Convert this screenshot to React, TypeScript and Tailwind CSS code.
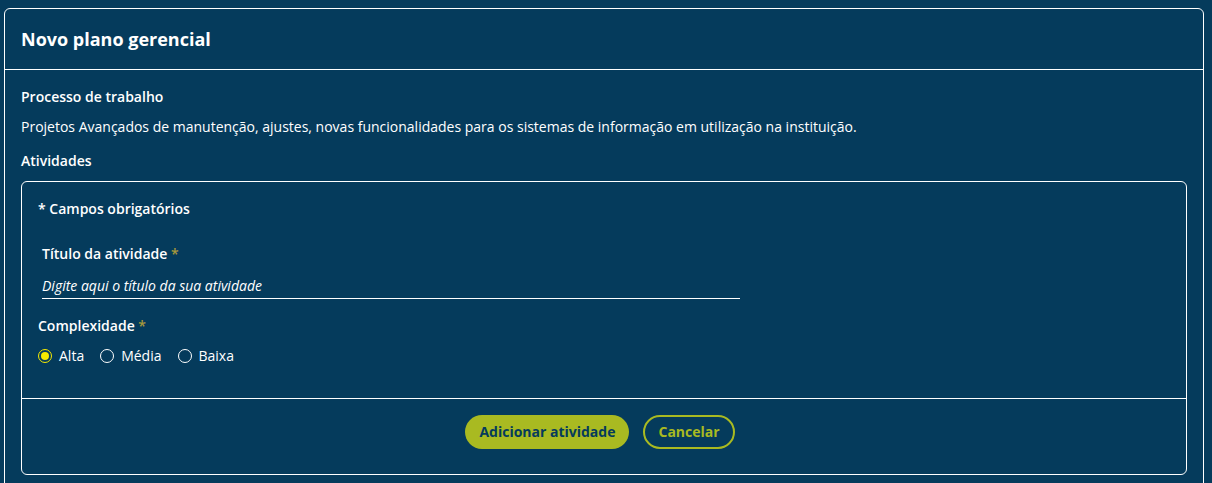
export default function App() {
  const options = ['Alta', 'Média', 'Baixa'];

  return (
    <div
      className="min-h-screen bg-[#053b5c] pl-1 pr-2 pt-2 text-white"
      style={{ fontFamily: '"Open Sans", sans-serif' }}
    >
      <div className="rounded-md border border-white">
        {/* Header */}
        <div className="flex h-[61px] items-center border-b border-white px-4">
          <h1 className="text-[18px] font-bold">Novo plano gerencial</h1>
        </div>

        {/* Body */}
        <div className="px-4 pt-[17px] pb-6 text-[14px] leading-5">
          <p className="font-semibold">Processo de trabalho</p>
          <p className="mt-[10px]">
            Projetos Avançados de manutenção, ajustes, novas funcionalidades para os sistemas de informação em
            utilização na instituição.
          </p>
          <p className="mt-[14px] font-semibold">Atividades</p>

          <div className="mt-[10px] rounded-md border border-white">
            <div className="px-4 pt-[17px] pb-8">
              <p className="font-semibold">* Campos obrigatórios</p>

              <div className="mt-[25px] pl-1">
                <label className="block font-semibold">
                  Título da atividade <span className="text-[#a8993b]">*</span>
                </label>
                <div className="mt-3 w-[698px] border-b border-white pb-[2px] italic">
                  Digite aqui o título da sua atividade
                </div>
              </div>

              <p className="mt-[17px] font-semibold">
                Complexidade <span className="text-[#a8993b]">*</span>
              </p>
              <div className="mt-[10px] flex items-center gap-4">
                {options.map((opt, i) => (
                  <label key={opt} className="flex items-center gap-[7px]">
                    {i === 0 ? (
                      <span className="flex h-[14px] w-[14px] items-center justify-center rounded-full border-[1.5px] border-[#f5ea00]">
                        <span className="h-[8px] w-[8px] rounded-full bg-[#f5ea00]" />
                      </span>
                    ) : (
                      <span className="h-[14px] w-[14px] rounded-full border border-white" />
                    )}
                    <span>{opt}</span>
                  </label>
                ))}
              </div>
            </div>

            <div className="flex justify-center gap-[14px] border-t border-white pt-4 pr-2 pb-[25px]">
              <button className="h-[34px] rounded-full bg-[#a9ba21] px-[14px] font-bold text-[#053b5c]">
                Adicionar atividade
              </button>
              <button className="h-[34px] rounded-full border-2 border-[#a9ba21] px-[13px] font-bold text-[#a9ba21]">
                Cancelar
              </button>
            </div>
          </div>
        </div>
      </div>
    </div>
  );
}
